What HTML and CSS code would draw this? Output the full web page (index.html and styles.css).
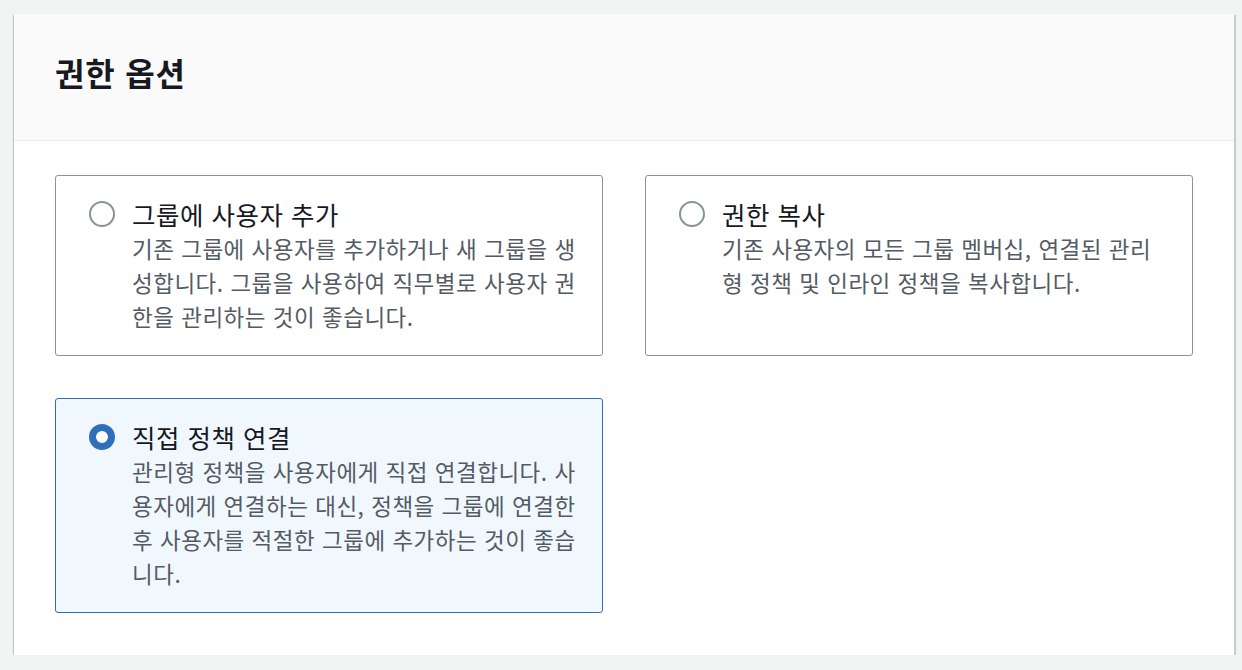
FILE: index.html
```html
<!DOCTYPE html>
<html lang="ko">
  <head>
    <meta charset="UTF-8" />
    <meta name="viewport" content="width=device-width, initial-scale=1.0" />
    <title>권한 옵션</title>
    <link rel="stylesheet" href="styles.css">
  </head>
  <body>
    <div class="panel">
      <div class="panel-header">
        <h2>권한 옵션</h2>
      </div>
      <div class="panel-body">
        <label class="option">
          <span class="radio"></span>
          <span class="option-text">
            <span class="option-title">그룹에 사용자 추가</span>
            <span class="option-desc">기존 그룹에 사용자를 추가하거나 새 그룹을 생성합니다. 그룹을 사용하여 직무별로 사용자 권한을 관리하는 것이 좋습니다.</span>
          </span>
        </label>
        <label class="option">
          <span class="radio"></span>
          <span class="option-text">
            <span class="option-title">권한 복사</span>
            <span class="option-desc">기존 사용자의 모든 그룹 멤버십, 연결된 관리형 정책 및 인라인 정책을 복사합니다.</span>
          </span>
        </label>
        <!-- 선택된 옵션 -->
        <label class="option selected">
          <span class="radio"></span>
          <span class="option-text">
            <span class="option-title">직접 정책 연결</span>
            <span class="option-desc">관리형 정책을 사용자에게 직접 연결합니다. 사용자에게 연결하는 대신, 정책을 그룹에 연결한 후 사용자를 적절한 그룹에 추가하는 것이 좋습니다.</span>
          </span>
        </label>
      </div>
    </div>
  </body>
</html>
```

FILE: styles.css
```css
body {
  margin: 0;
  padding: 14px 8px 0 14px;
  background-color: #f2f3f3;
  font-family: "Noto Sans CJK KR", "Noto Sans", sans-serif;
  color: #16191f;
}
.panel {
  background-color: #ffffff;
  box-shadow: 0 2px 1px 0 rgba(0, 28, 36, 0.3), 2px 1px 1px 0 rgba(0, 28, 36, 0.15),
    -1px 1px 1px 0 rgba(0, 28, 36, 0.15);
}
.panel-header {
  background-color: #fafafa;
  border-bottom: 1px solid #eaeded;
  padding: 38px 41px 48px;
}
h2 {
  margin: 0;
  font-size: 32px;
  line-height: 40px;
  letter-spacing: 0.8px;
  font-weight: 700;
}
.panel-body {
  display: grid;
  grid-template-columns: 1fr 1fr;
  gap: 42px;
  padding: 34px 41px 42px;
}
.option {
  display: flex;
  gap: 17px;
  border: 1px solid #879596;
  border-radius: 3px;
  padding: 20px 22px 22px 33px;
  cursor: pointer;
}
.option.selected {
  border-color: #2f6fb7;
  background-color: #f1f8fd;
}
.radio {
  flex: none;
  box-sizing: border-box;
  width: 26px;
  height: 26px;
  margin-top: 5px;
  border: 2px solid #879596;
  border-radius: 50%;
  background-color: #ffffff;
}
.selected .radio {
  border: 7px solid #2f6fb7;
}
.option-text {
  display: flex;
  flex-direction: column;
}
.option-title {
  font-size: 25.5px;
  line-height: 35px;
  letter-spacing: 0.5px;
}
.option-desc {
  font-size: 22.5px;
  line-height: 34px;
  letter-spacing: 0.5px;
  color: #545b64;
}
```
